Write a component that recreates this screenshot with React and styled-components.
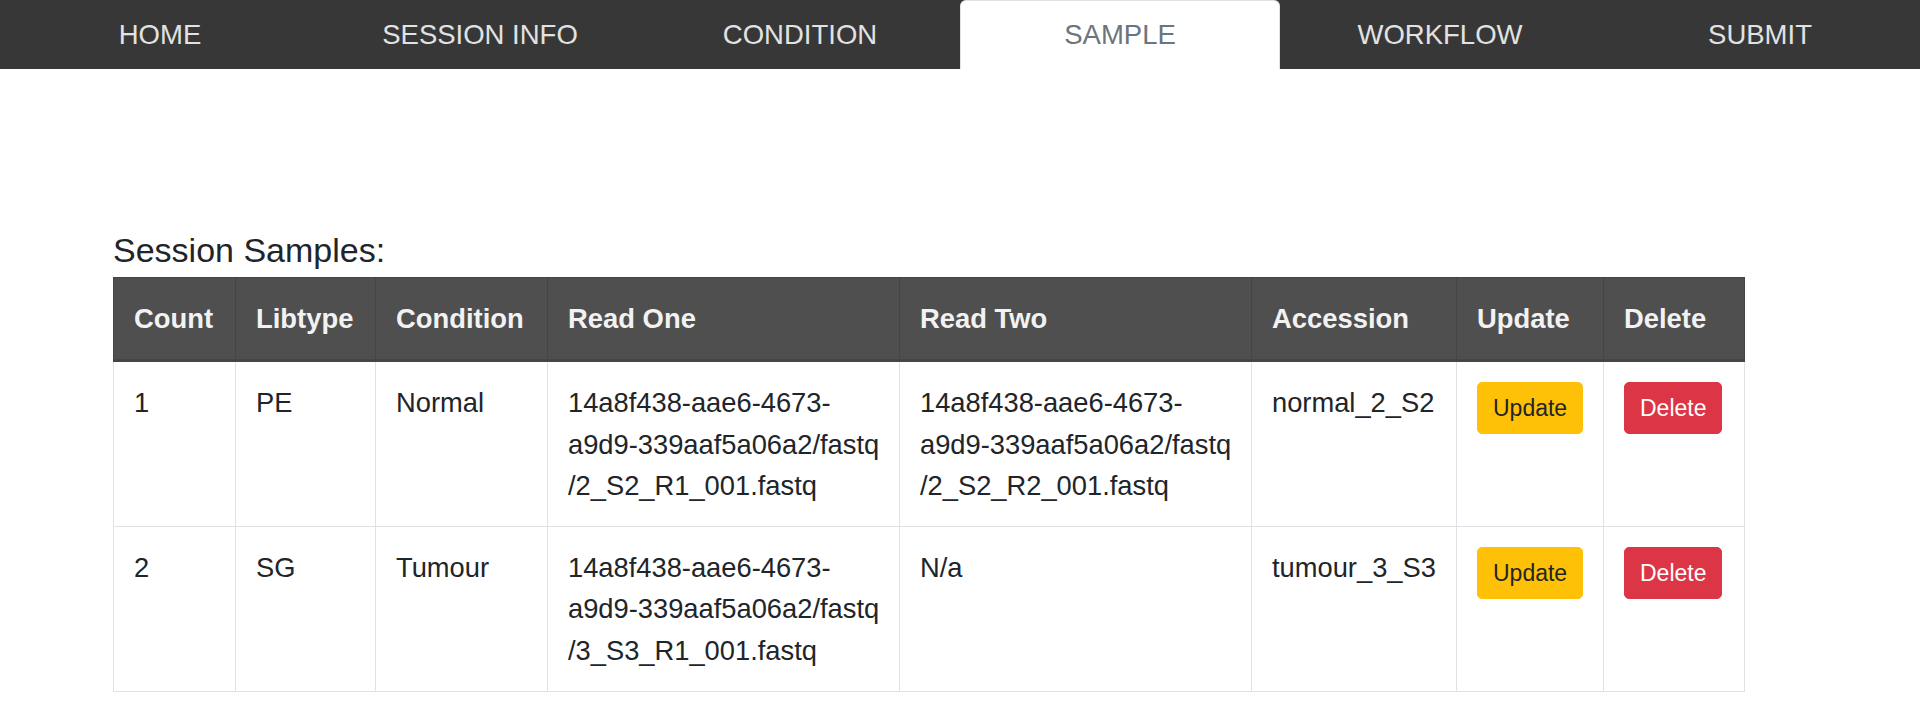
import styled, { createGlobalStyle } from "styled-components";

const GlobalStyle = createGlobalStyle`
  body {
    margin: 0;
    background: #fff;
    font-family: "Liberation Sans", Arial, sans-serif;
    color: #212529;
  }
`;

const tabs = ["HOME", "SESSION INFO", "CONDITION", "SAMPLE", "WORKFLOW", "SUBMIT"];

const columns = [
  { label: "Count", width: 122 },
  { label: "Libtype", width: 140 },
  { label: "Condition", width: 172 },
  { label: "Read One", width: 352 },
  { label: "Read Two", width: 352 },
  { label: "Accession", width: 205 },
  { label: "Update", width: 147 },
  { label: "Delete", width: 141 },
];

const samples = [
  {
    count: 1,
    libtype: "PE",
    condition: "Normal",
    readOne: "14a8f438-aae6-4673-a9d9-339aaf5a06a2/fastq/2_S2_R1_001.fastq",
    readTwo: "14a8f438-aae6-4673-a9d9-339aaf5a06a2/fastq/2_S2_R2_001.fastq",
    accession: "normal_2_S2",
  },
  {
    count: 2,
    libtype: "SG",
    condition: "Tumour",
    readOne: "14a8f438-aae6-4673-a9d9-339aaf5a06a2/fastq/3_S3_R1_001.fastq",
    readTwo: "N/a",
    accession: "tumour_3_S3",
  },
];

// split "uuid/fastq/file" into the three lines the table shows
const splitPath = (path) => {
  const cut = path.indexOf("/fastq/");
  if (cut < 0) return [path];
  const uuid = path.slice(0, cut);
  const parts = uuid.split("-");
  return [
    parts.slice(0, 3).join("-") + "-",
    parts.slice(3).join("-") + "/fastq",
    path.slice(cut + 6),
  ];
};

const FilePath = ({ value }) => (
  <>
    {splitPath(value).map((line) => (
      <PathLine key={line}>{line}</PathLine>
    ))}
  </>
);

const App = () => {
  return (
    <>
      <GlobalStyle />
      <NavBar>
        {tabs.map((tab) => (
          <NavTab key={tab} $active={tab === "SAMPLE"}>
            {tab}
          </NavTab>
        ))}
      </NavBar>
      <Main>
        <Heading>Session Samples:</Heading>
        <Table>
          <colgroup>
            {columns.map((col) => (
              <col key={col.label} style={{ width: col.width }} />
            ))}
          </colgroup>
          <thead>
            <tr>
              {columns.map((col) => (
                <HeadCell key={col.label}>{col.label}</HeadCell>
              ))}
            </tr>
          </thead>
          <tbody>
            {samples.map((s) => (
              <tr key={s.count}>
                <Cell>{s.count}</Cell>
                <Cell>{s.libtype}</Cell>
                <Cell>{s.condition}</Cell>
                <Cell>
                  <FilePath value={s.readOne} />
                </Cell>
                <Cell>
                  <FilePath value={s.readTwo} />
                </Cell>
                <Cell>{s.accession}</Cell>
                <Cell>
                  <ActionButton $variant="warning">Update</ActionButton>
                </Cell>
                <Cell>
                  <ActionButton $variant="danger">Delete</ActionButton>
                </Cell>
              </tr>
            ))}
          </tbody>
        </Table>
      </Main>
    </>
  );
};

const NavBar = styled.nav`
  display: flex;
  height: 69px;
  background-color: #373737;
`;

const NavTab = styled.div`
  flex: 1;
  display: flex;
  align-items: center;
  justify-content: center;
  font-size: 27.5px;
  line-height: 40px;
  color: ${(p) => (p.$active ? "#6c757d" : "#e2e2e2")};
  background-color: ${(p) => (p.$active ? "#fff" : "transparent")};
  border: 1px solid ${(p) => (p.$active ? "#dee2e6" : "transparent")};
  border-bottom: none;
  border-radius: 6px 6px 0 0;
  cursor: pointer;
`;

const Main = styled.main`
  padding: 161px 0 0 113px;
`;

const Heading = styled.h3`
  margin: 0 0 6px;
  font-size: 34px;
  font-weight: 400;
  line-height: 41px;
`;

const Table = styled.table`
  width: 1631px;
  table-layout: fixed;
  border-collapse: collapse;
  font-size: 27.3px;
  line-height: 41.25px;
`;

const HeadCell = styled.th`
  padding: 20px;
  text-align: left;
  font-size: 27.4px;
  font-weight: 700;
  color: #f2f2f2;
  background-color: #4f4f4f;
  border: 1px solid #454545;
  border-bottom: 3px solid #454545;
`;

const Cell = styled.td`
  padding: 20px;
  vertical-align: top;
  border: 1px solid #dee2e6;
  overflow-wrap: break-word;
`;

const PathLine = styled.span`
  display: block;
  white-space: nowrap;
`;

const ActionButton = styled.button`
  display: inline-block;
  padding: 8px 15px;
  font-family: inherit;
  font-size: 23px;
  line-height: 34px;
  border-radius: 5px;
  border: 1px solid ${(p) => (p.$variant === "danger" ? "#dc3545" : "#ffc107")};
  background-color: ${(p) => (p.$variant === "danger" ? "#dc3545" : "#ffc107")};
  color: ${(p) => (p.$variant === "danger" ? "#fff" : "#212529")};
  cursor: pointer;
`;

export default App;
